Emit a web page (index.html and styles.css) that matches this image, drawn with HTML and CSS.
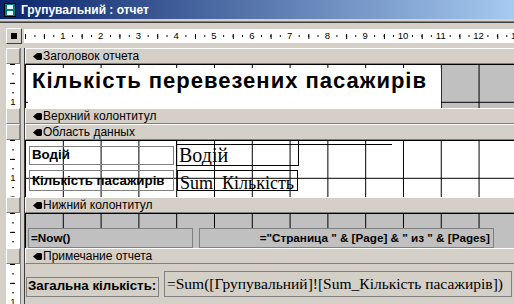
FILE: index.html
```html
<!DOCTYPE html>
<html>
<head>
<meta charset="utf-8">
<title>Групувальний : отчет</title>
<link rel="stylesheet" href="styles.css">
</head>
<body>
<div class="window">
  <div class="titlebar">
    <svg class="appicon" width="12" height="14" viewBox="0 0 12 14">
      <rect x="0.5" y="0.5" width="11" height="13" fill="#008080" stroke="#000"/>
      <rect x="3" y="2" width="6" height="4" fill="#E8F8F8"/>
      <rect x="3" y="8" width="6" height="4" fill="#E8F8F8"/>
    </svg>
    <span class="title">Групувальний : отчет</span>
  </div>
  <div class="client">
    <div class="rulerrow">
      <div class="corner"><span class="sq"></span></div>
      <div class="hruler">
        <span class="n"><i>1</i></span><span class="n"><i>2</i></span><span class="n"><i>3</i></span><span class="n"><i>4</i></span><span class="n"><i>5</i></span><span class="n"><i>6</i></span><span class="n"><i>7</i></span><span class="n"><i>8</i></span><span class="n"><i>9</i></span><span class="n"><i>10</i></span><span class="n"><i>11</i></span><span class="n"><i>12</i></span><span class="n"><i>13</i></span>
      </div>
    </div>
    <div class="designer">
      <div class="vcol">
        <div class="vbtn"></div>
        <div class="vcell h-rh"><span class="vnum">1</span></div>
        <div class="vbtn"></div>
        <div class="vcell h-ph"></div>
        <div class="vbtn"></div>
        <div class="vcell h-dt"><span class="vnum">1</span></div>
        <div class="vbtn"></div>
        <div class="vcell h-pf"></div>
        <div class="vbtn"></div>
        <div class="vcell h-rf"><span class="vnum">1</span></div>
      </div>
      <div class="vsep"></div>
      <div class="sections">
        <div class="bar"><svg class="hand" width="9" height="7" viewBox="0 0 9 7"><path d="M0 3.5 L4 0 H8 L9 1 V6 L8 7 H4 Z" fill="#000"/></svg><span>Заголовок отчета</span></div>
        <div class="sec h-rh sec-rh grid">
          <div class="ctl title-label">Кількість перевезених пасажирів</div>
        </div>
        <div class="bar"><svg class="hand" width="9" height="7" viewBox="0 0 9 7"><path d="M0 3.5 L4 0 H8 L9 1 V6 L8 7 H4 Z" fill="#000"/></svg><span>Верхний колонтитул</span></div>
        <div class="sec h-ph"></div>
        <div class="bar"><svg class="hand" width="9" height="7" viewBox="0 0 9 7"><path d="M0 3.5 L4 0 H8 L9 1 V6 L8 7 H4 Z" fill="#000"/></svg><span>Область данных</span></div>
        <div class="sec h-dt sec-white grid">
          <div class="ctl lbl lbl-vodiy">Водій</div>
          <div class="ctl lbl lbl-kilk">Кількість пасажирів</div>
          <div class="ctl tb tb-vodiy">Водій</div>
          <div class="ctl hline"></div>
          <div class="ctl tb tb-sum">Sum_Кількість</div>
        </div>
        <div class="bar"><svg class="hand" width="9" height="7" viewBox="0 0 9 7"><path d="M0 3.5 L4 0 H8 L9 1 V6 L8 7 H4 Z" fill="#000"/></svg><span>Нижний колонтитул</span></div>
        <div class="sec h-pf sec-gray grid">
          <div class="ctl lbl ftr tb-now">=Now()</div>
          <div class="ctl lbl ftr tb-page">="Страница " &amp; [Page] &amp; " из " &amp; [Pages]</div>
        </div>
        <div class="bar"><svg class="hand" width="9" height="7" viewBox="0 0 9 7"><path d="M0 3.5 L4 0 H8 L9 1 V6 L8 7 H4 Z" fill="#000"/></svg><span>Примечание отчета</span></div>
        <div class="sec h-rf sec-white grid">
          <div class="ctl lbl lbl-total">Загальна кількість:</div>
          <div class="ctl tb tb-total">=Sum([Групувальний]![Sum_Кількість пасажирів])</div>
        </div>
      </div>
    </div>
  </div>
</div>
</body>
</html>
```

FILE: styles.css
```css
* { box-sizing: border-box; }
html, body { margin: 0; padding: 0; }
body {
  width: 514px;
  height: 304px;
  overflow: hidden;
  background: #D4D0C8;
  font-family: "Liberation Sans", Arial, sans-serif;
  color: #000;
}
.window {
  width: 514px;
  height: 304px;
  display: flex;
  flex-direction: column;
  background: #D4D0C8;
}
.titlebar {
  height: 19px;
  flex: none;
  display: flex;
  align-items: center;
  gap: 5px;
  padding-left: 4px;
  background: linear-gradient(to right, #0A246A, #A6CAF0);
  color: #fff;
  font-weight: bold;
  font-size: 12px;
}
.appicon { display: block; flex: none; }
.client {
  flex: 1;
  min-height: 0;
  display: flex;
  flex-direction: column;
  margin-top: 2px;
  border-top: 1px solid #808080;
  box-shadow: inset 0 1px 0 #404040;
}
.rulerrow {
  height: 26px;
  flex: none;
  display: flex;
  align-items: flex-start;
  padding: 6px 0 0 6px;
}
.corner {
  width: 16px;
  height: 16px;
  border: 1px solid;
  border-color: #fff #404040 #404040 #fff;
  display: flex;
  align-items: center;
  justify-content: center;
}
.corner .sq { width: 6px; height: 6px; background: #000; }
.hruler {
  flex: 1;
  height: 14px;
  margin-top: 1px;
  margin-left: 2px;
  display: flex;
  padding-left: 19.9px;
  background-color: #fff;
  background-image:
    linear-gradient(to right, #000 1px, transparent 1px),
    linear-gradient(to right, #000 1px, transparent 1px);
  background-size: 9.45px 2px, 18.9px 5px;
  background-position: 1px 6px, 1px 5px;
  background-repeat: repeat-x;
  overflow: hidden;
}
.hruler .n {
  flex: none;
  width: 37.8px;
  text-align: center;
  font-size: 9.5px;
  line-height: 14px;
}
.hruler .n i { font-style: normal; background: #fff; padding: 0 1px; }

.designer { flex: 1; min-height: 0; display: flex; }
.vcol { width: 20px; flex: none; padding-left: 6px; display: flex; flex-direction: column; }
.vsep { width: 5px; flex: none; border-left: 1px solid #808080; border-right: 1px solid #404040; }
.sections { flex: 1; min-width: 0; display: flex; flex-direction: column; }

.vbtn {
  height: 16px;
  flex: none;
  background: #D4D0C8;
  border: 1px solid;
  border-color: #fff #808080 #808080 #fff;
}
.vcell {
  flex: none;
  background-color: #fff;
  background-image:
    linear-gradient(to bottom, #000 1px, transparent 1px),
    linear-gradient(to bottom, #000 1px, transparent 1px);
  background-size: 2px 9.45px, 5px 18.9px;
  background-position: 6px 9.45px, 4px 18.9px;
  background-repeat: repeat-y;
  overflow: hidden;
  display: flex;
  flex-direction: column;
}
.vnum {
  margin-top: 34px;
  height: 8px;
  line-height: 8px;
  font-size: 9.5px;
  text-align: center;
  background: #fff;
}
.h-rh { height: 44px; }
.h-ph { height: 0; }
.h-dt { height: 57px; }
.h-pf { height: 35px; }
.h-rf { flex: 1; height: auto; }

.bar {
  height: 16px;
  flex: none;
  display: flex;
  align-items: center;
  gap: 1px;
  padding-left: 7px;
  background: #D4D0C8;
  border-top: 1px solid #fff;
  border-left: 1px solid #fff;
  border-bottom: 1px solid #808080;
  font-size: 12px;
  white-space: nowrap;
}
.hand { display: block; flex: none; }

.sec { position: relative; flex: none; }
.grid {
  background-image:
    linear-gradient(to right, #000 1px, transparent 1px),
    linear-gradient(to bottom, #000 1px, transparent 1px);
  background-size: 37.8px 100%, 100% 37.8px;
  background-position: 0 0, 0 0;
}
.sec-rh {
  background-image:
    linear-gradient(to right, #000 1px, transparent 1px),
    linear-gradient(to bottom, #000 1px, transparent 1px),
    linear-gradient(to right, #fff 416px, #C0C0C0 416px);
  background-size: 37.8px 100%, 100% 37.8px, 100% 100%;
}
.sec-white { background-color: #fff; }
.sec-gray { background-color: #C0C0C0; }

.ctl { position: absolute; white-space: nowrap; overflow: hidden; }
.title-label {
  left: 3px; top: 4px; width: 413px; height: 40px;
  background: #fff;
  font-size: 22px;
  font-weight: bold;
  letter-spacing: 1px;
  line-height: 26px;
  padding-left: 4px;
}
.lbl {
  border: 1px solid #808080;
  font-weight: bold;
  font-size: 13.3px;
  padding-left: 2px;
}
.lbl-vodiy { left: 4px; top: 6px; width: 145px; height: 19px; line-height: 15px; }
.lbl-kilk { left: 4px; top: 30px; width: 145px; height: 21px; line-height: 19px; }
.tb {
  border: 1px solid #000;
  font-family: "Liberation Serif", "Times New Roman", serif;
}
.tb-vodiy { left: 151px; top: 0; width: 123px; height: 26px; font-size: 20px; line-height: 28px; padding-left: 2px; }
.hline { left: 151px; top: 4px; width: 216px; height: 1px; background: #000; }
.tb-sum { left: 152px; top: 30px; width: 121px; height: 21px; font-size: 18px; line-height: 22px; padding: 1px 0 0 2px; }
.ftr { font-size: 11.7px; background: #C0C0C0; }
.tb-now { left: 3px; top: 15px; width: 165px; height: 20px; line-height: 18px; padding-left: 2px; }
.tb-page { left: 174px; top: 15px; width: 295px; height: 20px; line-height: 18px; text-align: right; padding: 0 3px 0 0; }
.lbl-total { left: 1px; top: 13px; width: 133px; height: 20px; line-height: 15px; padding-left: 1px; }
.tb-total {
  left: 139px; top: 7px; width: 348px; height: 26px;
  border-color: #808080;
  font-size: 15.5px;
  line-height: 23px;
  padding-left: 2px;
}
```
